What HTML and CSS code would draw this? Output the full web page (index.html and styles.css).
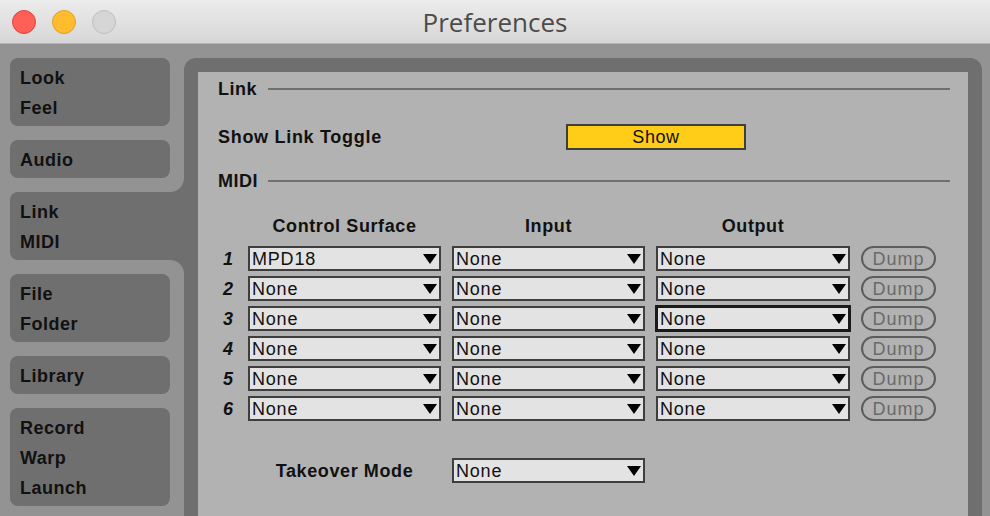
FILE: index.html
```html
<!DOCTYPE html>
<html lang="en">
<head>
  <meta charset="UTF-8" />
  <meta name="viewport" content="width=device-width, initial-scale=1.0"/>
  <title>Preferences</title>
  <link rel="stylesheet" href="styles.css">
</head>
<body>
  <div class="window">
    <!-- Title bar -->
    <header class="titlebar">
      <div class="lights">
        <span class="light light-close"></span>
        <span class="light light-min"></span>
        <span class="light light-max"></span>
      </div>
      <div class="title">Preferences</div>
    </header>

    <div class="main">
      <!-- Sidebar tabs -->
      <nav class="sidebar">
        <div class="cell cell-top">
          <div class="tab"><div>Look</div><div>Feel</div></div>
          <div class="tab"><div>Audio</div></div>
        </div>
        <div class="cell cell-active">
          <div class="tab tab-active"><div>Link</div><div>MIDI</div></div>
        </div>
        <div class="cell cell-bottom">
          <div class="tab"><div>File</div><div>Folder</div></div>
          <div class="tab"><div>Library</div></div>
          <div class="tab"><div>Record</div><div>Warp</div><div>Launch</div></div>
        </div>
      </nav>

      <!-- Settings panel -->
      <section class="panel">
        <div class="panel-inner">
          <div class="section-head">
            <span class="section-name">Link</span>
            <span class="section-line"></span>
          </div>

          <div class="toggle-row">
            <span class="label">Show Link Toggle</span>
            <div class="toggle-btn">Show</div>
          </div>

          <div class="section-head section-midi">
            <span class="section-name">MIDI</span>
            <span class="section-line"></span>
          </div>

          <div class="midi-grid midi-head">
            <span></span>
            <span class="col-title">Control Surface</span>
            <span class="col-title">Input</span>
            <span class="col-title">Output</span>
            <span></span>
          </div>

          <div class="midi-grid midi-rows" id="midi-rows"></div>

          <div class="midi-grid takeover">
            <span></span>
            <span class="col-title">Takeover Mode</span>
            <div class="dropdown"><span>None</span><i class="arrow"></i></div>
          </div>
        </div>
      </section>
    </div>
  </div>

  <script>
    // Строки MIDI-таблицы
    const rows = [
      { surface: 'MPD18', input: 'None', output: 'None' },
      { surface: 'None', input: 'None', output: 'None' },
      { surface: 'None', input: 'None', output: 'None', focus: true },
      { surface: 'None', input: 'None', output: 'None' },
      { surface: 'None', input: 'None', output: 'None' },
      { surface: 'None', input: 'None', output: 'None' }
    ];

    const rowsElement = document.getElementById('midi-rows');

    function dropdown(value, focused) {
      return `<div class="dropdown${focused ? ' dropdown-focus' : ''}"><span>${value}</span><i class="arrow"></i></div>`;
    }

    rows.forEach((row, i) => {
      rowsElement.insertAdjacentHTML('beforeend',
        `<span class="row-num">${i + 1}</span>` +
        dropdown(row.surface) +
        dropdown(row.input) +
        dropdown(row.output, row.focus) +
        `<div class="dump">Dump</div>`);
    });
  </script>
</body>
</html>
```

FILE: styles.css
```css
:root {
  --bg: #939393;
  --tab: #6f6f6f;
  --inner: #b2b2b2;
  --field: #e3e3e3;
  --border: #3e3e3e;
  --yellow: #ffcc17;
  --text: #111;
}

* {
  box-sizing: border-box;
}

body {
  margin: 0;
  width: 990px;
  height: 516px;
  overflow: hidden;
  background-color: var(--bg);
  font-family: 'Liberation Sans', Arial, sans-serif;
  color: var(--text);
}

.window {
  height: 516px;
  display: flex;
  flex-direction: column;
}

/* Title bar */
.titlebar {
  position: relative;
  height: 44px;
  flex-shrink: 0;
  background: linear-gradient(#ececec, #d6d6d6);
  border-bottom: 1px solid #b3b3b3;
  display: flex;
  align-items: center;
  justify-content: center;
}

.lights {
  position: absolute;
  left: 12px;
  top: 10px;
  display: flex;
  gap: 16px;
}

.light {
  width: 24px;
  height: 24px;
  border-radius: 50%;
  border: 1px solid;
}

.light-close { background: #fe5f57; border-color: #e0443e; }
.light-min { background: #febc2e; border-color: #dea123; }
.light-max { background: #d6d6d6; border-color: #bfbfbf; }

.title {
  font-family: 'Open Sans', sans-serif;
  font-size: 26px;
  color: #4b4b4b;
  margin-top: 1px;
}

/* Layout */
.main {
  flex: 1;
  display: flex;
  padding-right: 8px;
  min-height: 0;
}

.sidebar {
  width: 184px;
  flex-shrink: 0;
  display: flex;
  flex-direction: column;
  background-color: var(--tab);
}

.cell {
  background-color: var(--bg);
  padding-left: 10px;
  display: flex;
  flex-direction: column;
  gap: 14px;
}

.cell-top {
  padding: 14px 14px 14px 10px;
  border-bottom-right-radius: 14px;
}

.cell-bottom {
  flex: 1;
  padding: 14px 14px 0 10px;
  border-top-right-radius: 14px;
}

.tab {
  background-color: var(--tab);
  border-radius: 8px;
  padding: 5px 10px 3px;
  font-size: 18px;
  font-weight: bold;
  letter-spacing: 0.5px;
  line-height: 30px;
}

.tab-active {
  border-radius: 8px 0 0 8px;
}

/* Panel */
.panel {
  flex: 1;
  margin-top: 14px;
  background-color: var(--tab);
  border-radius: 12px 12px 0 0;
  padding: 14px 14px 0 14px;
}

.panel-inner {
  height: 100%;
  background-color: var(--inner);
  padding: 7px 18px 0 20px;
}

.section-head {
  display: flex;
  align-items: center;
  height: 20px;
}

.section-midi {
  margin-top: 22px;
}

.section-name {
  width: 50px;
  font-size: 18px;
  font-weight: bold;
  letter-spacing: 0.5px;
  padding-top: 1px;
}

.section-line {
  flex: 1;
  height: 2px;
  background-color: var(--tab);
}

.toggle-row {
  margin-top: 25px;
  height: 25px;
  display: flex;
  align-items: center;
}

.label {
  width: 348px;
  font-size: 18px;
  font-weight: bold;
  letter-spacing: 0.7px;
  padding-top: 2px;
}

.toggle-btn {
  width: 180px;
  height: 26px;
  background-color: var(--yellow);
  border: 2px solid var(--border);
  font-size: 18px;
  letter-spacing: 0.6px;
  padding-top: 1px;
  display: flex;
  align-items: center;
  justify-content: center;
}

/* MIDI table */
.midi-grid {
  display: grid;
  grid-template-columns: 19px 193px 193px 194px 75px;
  column-gap: 11px;
}

.midi-head {
  margin-top: 24px;
  height: 20px;
  align-items: center;
}

.col-title {
  text-align: center;
  font-size: 18px;
  font-weight: bold;
  letter-spacing: 0.6px;
  padding-top: 1px;
}

.midi-rows {
  margin-top: 11px;
  grid-auto-rows: 25px;
  row-gap: 5px;
}

.row-num {
  align-self: center;
  text-align: right;
  padding-right: 4px;
  padding-top: 2px;
  font-size: 18px;
  font-weight: bold;
  font-style: italic;
}

.dropdown {
  height: 25px;
  background-color: var(--field);
  border: 2px solid var(--border);
  padding: 1px 2px 0;
  display: flex;
  align-items: center;
  justify-content: space-between;
  font-size: 18px;
  letter-spacing: 0.8px;
}

.dropdown-focus {
  border-color: #1a1a1a;
  outline: 1px solid #1a1a1a;
}

.arrow {
  width: 0;
  height: 0;
  border-left: 7px solid transparent;
  border-right: 7px solid transparent;
  border-top: 10px solid #000;
}

.dump {
  height: 25px;
  border: 2px solid #5c5c5c;
  border-radius: 13px;
  color: #6a6a6a;
  font-size: 18px;
  letter-spacing: 1px;
  padding-top: 1px;
  display: flex;
  align-items: center;
  justify-content: center;
}

.takeover {
  margin-top: 37px;
  height: 25px;
  align-items: center;
}
```
